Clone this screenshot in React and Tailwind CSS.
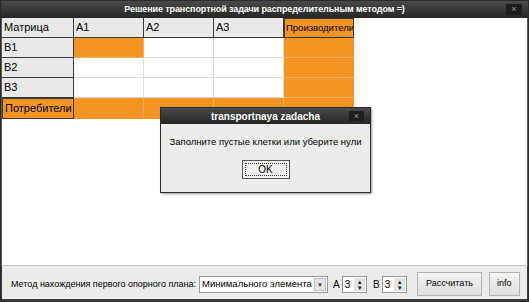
export default function App() {
  const cols = ["A1", "A2", "A3"];
  const rows = [
    { name: "B1", cells: [true, false, false] },
    { name: "B2", cells: [false, false, false] },
    { name: "B3", cells: [false, false, false] },
  ];
  const orange = "bg-[#f39423]";

  return (
    <div
      className="relative flex h-[302px] w-[529px] flex-col overflow-hidden whitespace-nowrap border border-[#2b2b2b] bg-white text-[11px] text-black"
      style={{ fontFamily: '"Liberation Sans", "DejaVu Sans", sans-serif' }}
    >
      {/* title bar */}
      <div className="relative flex h-[17px] shrink-0 items-center justify-center bg-gradient-to-b from-[#4a4a4a] to-[#262626]">
        <span className="text-[9px] font-bold tracking-[-0.1px] text-white">
          Решение транспортной задачи распределительным методом =)
        </span>
        <div className="absolute right-[6px] top-[3px] flex h-[11px] w-[16px] items-center justify-center bg-[#1e1e1e] text-[9px] leading-none text-[#9a9a9a]">
          ×
        </div>
      </div>

      {/* content */}
      <div className="flex-1 border-x border-[#5a5a5a] bg-white">
        <div className="grid w-[353px] grid-cols-[72px_70px_70px_70px_70px]">
          <div className="flex h-[20px] items-center border-b border-r border-[#3a3a3a] bg-[#e9e9e9] px-[2px]">
            Матрица
          </div>
          {cols.map((c) => (
            <div
              key={c}
              className="flex h-[20px] items-center border-b border-r border-[#3a3a3a] bg-[#e9e9e9] px-[2px]"
            >
              {c}
            </div>
          ))}
          <div className={`flex h-[20px] items-center overflow-hidden border border-[#3a3a3a] ${orange} px-[1px] text-[9.5px]`}>
            Производители
          </div>

          {rows.map((r) => (
            <>
              <div
                key={r.name}
                className="flex h-[20px] items-center border-b border-r border-[#3a3a3a] bg-[#e9e9e9] px-[2px]"
              >
                {r.name}
              </div>
              {r.cells.map((on, i) => (
                <div
                  key={r.name + i}
                  className={`h-[20px] border-b border-r ${
                    on ? orange + " border-[#f7b060]" : "border-[#dcdcdc] bg-white"
                  }`}
                />
              ))}
              <div className={`h-[20px] border-b border-[#f7b060] ${orange}`} />
            </>
          ))}

          <div className={`flex h-[21px] items-center border border-[#3a3a3a] ${orange} px-[2px]`}>
            Потребители
          </div>
          {cols.map((c) => (
            <div key={"p" + c} className={`h-[21px] border-r border-[#f7b060] ${orange}`} />
          ))}
          <div className={`h-[21px] ${orange}`} />
        </div>
      </div>

      {/* bottom bar */}
      <div className="flex h-[36px] shrink-0 items-center border-x border-b-2 border-[#3a3a3a] border-t border-t-[#c8c8c8] bg-[#ececec] pl-[9px] pr-[7px] text-[9px]">
        <span className="mt-[4px]">Метод нахождения первого опорного плана:</span>
        <div className="ml-[3px] mt-[4px] flex h-[17px] w-[132px] items-center border border-[#9c9c9c] bg-white pl-[2px] text-[9.5px]">
          <span className="flex-1">Минимального элемента</span>
          <div className="mr-[1px] flex h-[13px] w-[12px] items-center justify-center border border-[#c0c0c0] bg-[#e4e4e4] text-[6px] leading-none text-[#333]">
            ▼
          </div>
        </div>
        <span className="ml-[5px] mt-[4px] text-[10px]">A</span>
        <Spinner />
        <span className="ml-[6px] mt-[4px] text-[10px]">B</span>
        <Spinner />
        <button className="ml-[10px] mt-[2px] h-[24px] w-[66px] border border-[#b4b4b4] bg-gradient-to-b from-[#f4f4f4] to-[#dedede]">
          Рассчитать
        </button>
        <button className="ml-[7px] mt-[2px] h-[24px] w-[32px] border border-[#b4b4b4] bg-gradient-to-b from-[#f4f4f4] to-[#dedede]">
          info
        </button>
      </div>

      {/* dialog */}
      <div className="absolute left-[159px] top-[106px] flex h-[86px] w-[211px] flex-col border border-[#2a2a2a] bg-[#ececec] shadow-[1px_1px_2px_rgba(0,0,0,0.4)]">
        <div className="relative flex h-[16px] shrink-0 items-center justify-center bg-gradient-to-b from-[#4a4a4a] to-[#262626]">
          <span className="text-[10px] font-bold text-white">transportnaya zadacha</span>
          <div className="absolute right-[6px] top-[3px] flex h-[10px] w-[15px] items-center justify-center bg-[#1e1e1e] text-[9px] leading-none text-[#9a9a9a]">
            ×
          </div>
        </div>
        <div className="flex flex-1 flex-col items-center text-[9.5px]">
          <div className="mt-[11px]">Заполните пустые клетки или уберите нули</div>
          <button className="mt-[11px] flex h-[19px] w-[48px] items-center justify-center border border-[#555] bg-[#f2f2f2] p-[2px]">
            <span className="flex h-full w-full items-center justify-center border border-dotted border-[#333] text-[10px]">
              OK
            </span>
          </button>
        </div>
      </div>
    </div>
  );
}

function Spinner() {
  return (
    <div className="ml-[2px] mt-[4px] flex h-[17px] w-[26px] items-center border border-[#9c9c9c] bg-white pl-[2px] text-[10px]">
      <span className="flex-1">3</span>
      <div className="mr-[1px] flex h-[13px] w-[11px] flex-col items-center justify-center bg-[#e4e4e4] text-[6px] leading-[6px] text-[#222]">
        <span>▲</span>
        <span>▼</span>
      </div>
    </div>
  );
}
